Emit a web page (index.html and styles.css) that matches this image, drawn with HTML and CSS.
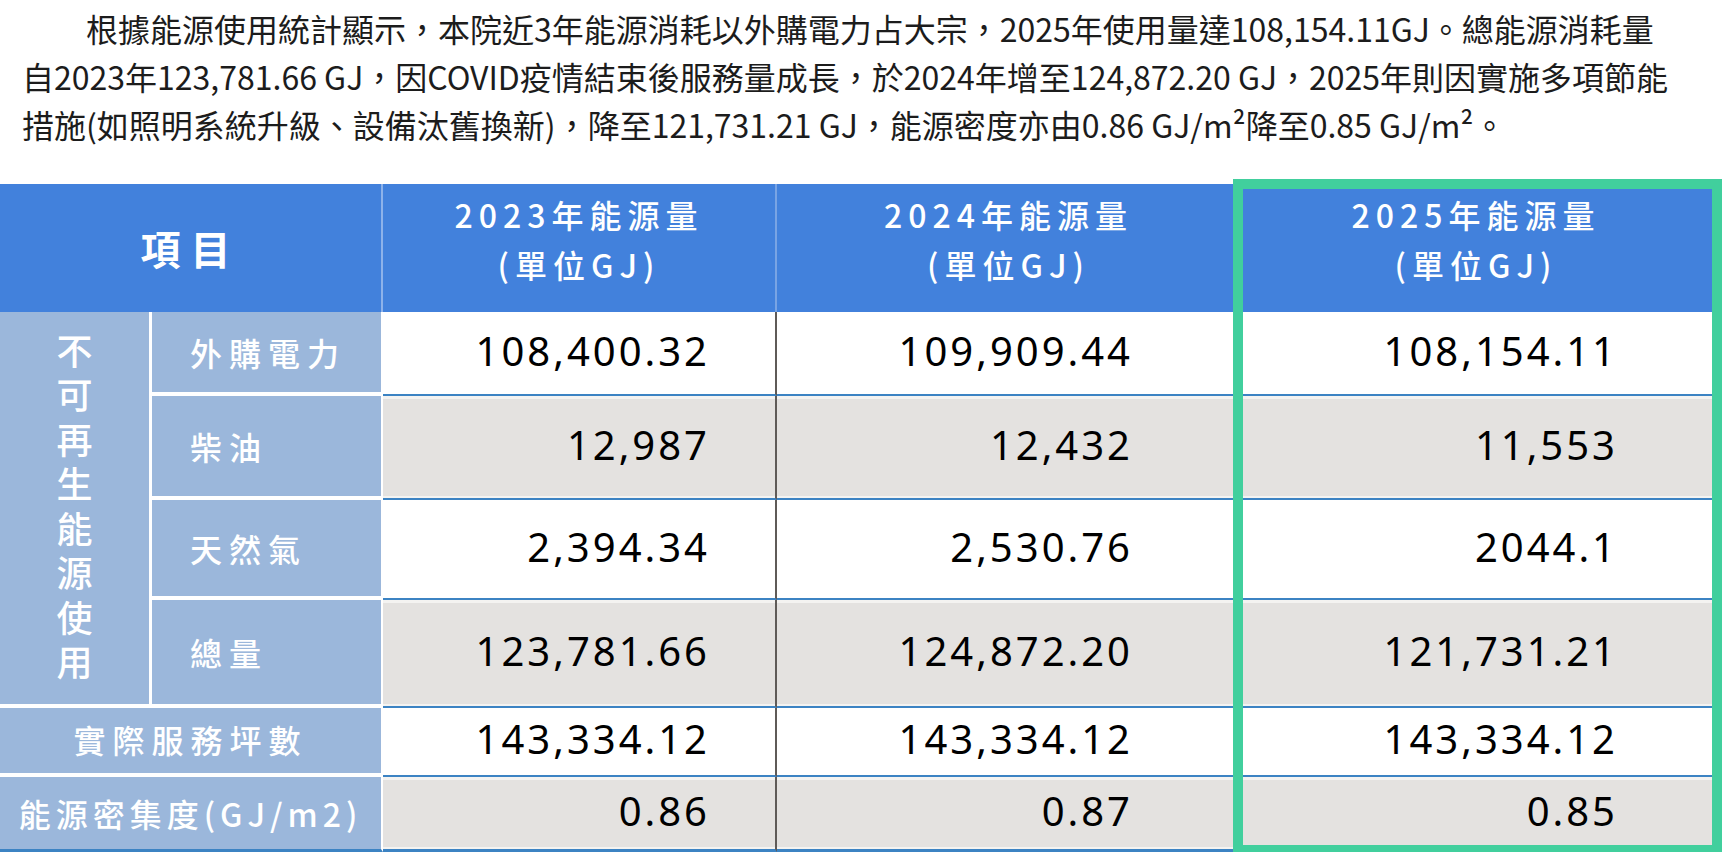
FILE: index.html
```html
<!DOCTYPE html>
<html lang="zh-Hant">
<head>
<meta charset="utf-8">
<title>能源使用統計</title>
<link rel="stylesheet" href="styles.css">
</head>
<body>
<p class="intro">根據能源使用統計顯示，本院近3年能源消耗以外購電力占大宗，2025年使用量達108,154.11GJ。總能源消耗量自2023年123,781.66 GJ，因COVID疫情結束後服務量成長，於2024年增至124,872.20 GJ，2025年則因實施多項節能措施(如照明系統升級、設備汰舊換新)，降至121,731.21 GJ，能源密度亦由0.86 GJ/m²降至0.85 GJ/m²。</p>
<div class="table-wrap">
  <table class="energy">
    <colgroup>
      <col class="c-grp">
      <col class="c-sub">
      <col class="c-2023">
      <col class="c-2024">
      <col class="c-2025">
    </colgroup>
    <thead>
      <tr>
        <th colspan="2" class="h-item">項目</th>
        <th class="h-year h-sep">2023年能源量<br>(單位GJ)</th>
        <th class="h-year">2024年能源量<br>(單位GJ)</th>
        <th class="h-year">2025年能源量<br>(單位GJ)</th>
      </tr>
    </thead>
    <tbody>
      <tr class="r1">
        <th rowspan="4" class="grp"><span class="vert">不可再生能源使用</span></th>
        <th class="sub">外購電力</th>
        <td class="v23">108,400.32</td>
        <td class="v24">109,909.44</td>
        <td class="v25">108,154.11</td>
      </tr>
      <tr class="r2 alt">
        <th class="sub">柴油</th>
        <td class="v23">12,987</td>
        <td class="v24">12,432</td>
        <td class="v25">11,553</td>
      </tr>
      <tr class="r3">
        <th class="sub">天然氣</th>
        <td class="v23">2,394.34</td>
        <td class="v24">2,530.76</td>
        <td class="v25">2044.1</td>
      </tr>
      <tr class="r4 alt">
        <th class="sub">總量</th>
        <td class="v23">123,781.66</td>
        <td class="v24">124,872.20</td>
        <td class="v25">121,731.21</td>
      </tr>
      <tr class="r5">
        <th colspan="2" class="wide">實際服務坪數</th>
        <td class="v23">143,334.12</td>
        <td class="v24">143,334.12</td>
        <td class="v25">143,334.12</td>
      </tr>
      <tr class="r6 alt last">
        <th colspan="2" class="wide tight">能源密集度(GJ/m2)</th>
        <td class="v23">0.86</td>
        <td class="v24">0.87</td>
        <td class="v25">0.85</td>
      </tr>
    </tbody>
  </table>
  <div class="highlight"></div>
</div>
</body>
</html>
```

FILE: styles.css
```css
* {
  box-sizing: border-box;
}

html, body {
  margin: 0;
  padding: 0;
  background: #ffffff;
}

body {
  font-family: "Noto Sans CJK TC", "Noto Sans", sans-serif;
  color: #1a1a1a;
  width: 1730px;
  overflow: hidden;
}

.intro {
  margin: 0 0 0 22px;
  padding-top: 4px;
  width: 1650px;
  font-size: 32px;
  line-height: 48px;
  text-indent: 64px;
  text-align: left;
  color: #1c1c1c;
}

.table-wrap {
  position: relative;
  margin-top: 36px;
  width: 1730px;
}

.energy {
  border-collapse: separate;
  border-spacing: 0;
  table-layout: fixed;
  width: 1712px;
}

.c-grp { width: 152px; }
.c-sub { width: 231px; }
.c-2023 { width: 394px; }
.c-2024 { width: 463px; }
.c-2025 { width: 472px; }

.energy th,
.energy td {
  padding: 0;
  vertical-align: middle;
}

/* header */
.energy thead th {
  height: 128px;
  background: #4281dc;
  color: #ffffff;
  text-align: center;
}

.h-item {
  font-size: 40px;
  font-weight: 700;
  letter-spacing: 10px;
  border-right: 2px solid #8db2ea;
}

.h-year {
  font-size: 32px;
  font-weight: 500;
  letter-spacing: 6px;
  line-height: 50px;
  padding-bottom: 18px !important;
}

.h-sep {
  border-right: 2px solid #79a4e4;
}

/* row heights */
.r1 { height: 84px; }
.r2 { height: 104px; }
.r3 { height: 100px; }
.r4 { height: 108px; }
.r5 { height: 69px; }
.r6 { height: 75px; }

/* label cells */
.energy tbody th {
  background: #9bb7db;
  color: #ffffff;
  font-weight: 500;
  font-size: 32px;
  letter-spacing: 7px;
  border-bottom: 4px solid #ffffff;
}

.grp {
  text-align: center;
  border-right: 3px solid #ffffff;
  padding-top: 14px !important;
}

.vert {
  display: inline-block;
  writing-mode: vertical-rl;
  font-size: 36px;
  font-weight: 500;
  line-height: 1;
  letter-spacing: 8.5px;
}

.sub {
  text-align: left;
  padding-left: 38px !important;
  border-right: 2px solid #ffffff;
}

.wide {
  text-align: center;
  border-right: 2px solid #ffffff;
  padding-bottom: 4px !important;
}

.tight {
  letter-spacing: 5px !important;
  padding-bottom: 0 !important;
}

/* data cells */
.energy td {
  font-family: "Noto Sans", "Open Sans", sans-serif;
  font-size: 40px;
  letter-spacing: 3px;
  color: #000000;
  text-align: right;
  background: #ffffff;
  border-bottom: 2px solid #3c83c3;
  padding-bottom: 6px;
}

.alt td {
  background: #e4e2e0;
  box-shadow: inset 0 3px 0 #f4f3f1, inset 0 -2px 0 #f4f3f1;
}

.v23 {
  padding-right: 65px !important;
  border-right: 2px solid #5f5b58;
}

.v24 {
  padding-right: 107px !important;
}

.v25 {
  padding-right: 94px !important;
}

.last th,
.last td {
  border-bottom: 3px solid #3c83c3 !important;
}

/* highlight frame over the 2025 column */
.highlight {
  position: absolute;
  left: 1233px;
  top: -5px;
  width: 489px;
  height: 676px;
  border: 10px solid #41cf9d;
  pointer-events: none;
}
```
